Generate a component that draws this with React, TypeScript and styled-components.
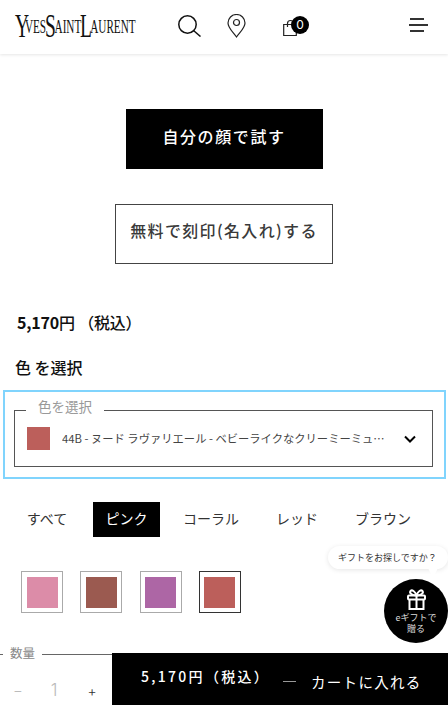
import React from "react";
import styled, { createGlobalStyle } from "styled-components";

const Global = createGlobalStyle`
  html, body { margin: 0; padding: 0; background: #fff; }
  body { font-family: "Noto Sans CJK JP", "Noto Sans", sans-serif; color: #222; }
  * { box-sizing: border-box; }
`;
const Page = styled.div`
  width: 448px; height: 705px; overflow: hidden; position: relative; background: #fff;
`;
const Header = styled.header`
  height: 54px; display: flex; align-items: center; padding: 0 20px 2px 15px;
  background: #fff; box-shadow: 0 1px 3px rgba(0,0,0,.1);
`;
const Logo = styled.svg`
  width: 122px; height: 26px; display: block; flex: none; overflow: visible;
  text { font-family: "Liberation Serif", serif; font-size: 19px; fill: #111; }
  tspan[data-big] { font-size: 33px; }
`;
const IconLink = styled.a<{ $ml: number }>`
  display: flex; position: relative; margin-left: ${p => p.$ml}px; color: #111;
`;
const Badge = styled.span`
  position: absolute; left: 8px; top: 0; width: 18px; height: 18px; border-radius: 50%;
  background: #000; color: #fff; font: 12px/18px "Inter", sans-serif; text-align: center;
`;
const Burger = styled.div`
  margin: 0 0 2px auto; width: 19px; display: flex; flex-direction: column; gap: 4.5px; align-items: flex-start;
`;
const BurgerLine = styled.span<{ $w: number; $off?: number }>`
  display: block; height: 1.5px; width: ${p => p.$w}px; margin-left: ${p => p.$off ?? 0}px; background: #333;
`;
const Cta = styled.div`
  display: flex; flex-direction: column; align-items: center; gap: 35px; padding-top: 55px;
`;
const TryButton = styled.button`
  width: 197px; height: 60px; border: 1px solid #000; background: #000; color: #fff;
  font: 500 16px "Noto Sans CJK JP", sans-serif; letter-spacing: 1.6px; padding: 0 0 6px;
`;
const EngraveButton = styled.button`
  width: 218px; height: 60px; border: 1px solid #444; background: #fff; color: #3a3a3a;
  font: 500 16px "Noto Sans CJK JP", sans-serif; letter-spacing: 1.35px; padding: 0 0 8px;
`;
const Price = styled.div`
  margin: 46px 0 0 17px; height: 24px; font: 500 16px/24px "Noto Sans CJK JP", sans-serif; color: #111;
  letter-spacing: -.2px;
`;
const PriceNum = styled.b`
  font-weight: 700;
`;
const Heading = styled.div`
  margin: 21px 0 0 15px; height: 24px; font: 500 16px/24px "Noto Sans CJK JP", sans-serif; color: #111;
`;
const Focus = styled.div`
  margin: 11px 2px 0 3px; height: 89px; border: 2px solid #80d4fd; padding: 4px 11px 0 9px;
`;
const Field = styled.fieldset`
  margin: 0; padding: 3px 12px 0; height: 71px; border: 1px solid #555; min-width: 0;
  display: block;
`;
const Legend = styled.legend`
  margin-left: -1px; padding: 0 12px 8px; font-size: 13.5px; line-height: 20px; color: #999; letter-spacing: 0;
`;
const Select = styled.div`
  display: flex; align-items: center; height: 23px;
`;
const Chip = styled.span`
  width: 23px; height: 23px; flex: none; background: #bc5f5b;
`;
const SelectText = styled.span`
  margin-left: 12px; width: 329px; font-size: 11.3px; line-height: 23px; color: #444;
  white-space: nowrap; overflow: hidden; text-overflow: ellipsis;
`;
const Chevron = styled.svg`
  margin-left: 13px; width: 12px; height: 8px; flex: none;
`;
const Tabs = styled.div`
  display: flex; gap: 13px; margin: 23px 0 0 14px; height: 35px; align-items: stretch;
`;
const Tab = styled.div<{ $active?: boolean; $w: number }>`
  width: ${p => p.$w}px; display: flex; align-items: center; justify-content: center;
  font-size: 14px; padding-bottom: 4px;
  background: ${p => (p.$active ? "#000" : "transparent")};
  color: ${p => (p.$active ? "#fff" : "#333")};
`;
const Swatches = styled.div`
  display: flex; gap: 17.3px; margin: 34px 0 0 21px;
`;
const Swatch = styled.div<{ $c: string; $active?: boolean }>`
  width: 42px; height: 42px; padding: 4.5px;
  border: 1.5px solid ${p => (p.$active ? "#333" : "#aaa")};
  &::after { content: ""; display: block; width: 100%; height: 100%; background: ${p => p.$c}; }
`;
const Bar = styled.div`
  position: absolute; left: 0; right: 0; bottom: 0; height: 52px; display: flex; background: #fff;
`;
const Qty = styled.fieldset`
  width: 112px; margin: -9px 0 0; padding: 0; border: 0; border-top: 1px solid #666; min-width: 0;
  display: block; height: 61px;
`;
const QtyLegend = styled.legend`
  margin-left: 3px; padding: 0 7px 2px; font-size: 12.5px; line-height: 18px; color: #888;
`;
const QtyRow = styled.div`
  display: grid; grid-template-columns: 36px 36px 40px; width: 112px; height: 52px;
  align-items: center; justify-items: center; font-family: "Inter", sans-serif;
`;
const QtyCell = styled.span<{ $c: string; $s: number }>`
  color: ${p => p.$c}; font-size: ${p => p.$s}px; font-weight: 300;
`;
const AddToCart = styled.div`
  flex: 1; background: #000; color: #fff; display: flex; align-items: center; padding-left: 29px;
`;
const CartPrice = styled.span`
  font: 500 14px "Noto Sans CJK JP", sans-serif; letter-spacing: 2.3px; width: 142px; margin-bottom: 6px;
  white-space: nowrap;
`;
const CartDash = styled.span`
  width: 13px; height: 1px; background: #999; margin: 4px 15px 0 0; flex: none;
`;
const CartLabel = styled.span`
  font: 400 14.5px "Noto Sans CJK JP", sans-serif; letter-spacing: 1.3px; white-space: nowrap; margin-top: 4px;
`;
const Bubble = styled.div`
  position: absolute; left: 328px; top: 546px; width: 120px; height: 23px; border-radius: 12px; background: #fff;
  box-shadow: 0 1px 5px rgba(0,0,0,.1); font-size: 9px; line-height: 23px; padding-left: 10px; color: #333;
  white-space: nowrap;
  &::after {
    content: ""; position: absolute; left: 100px; top: 22px; width: 0; height: 0;
    border-left: 5px solid transparent; border-right: 5px solid transparent; border-top: 10px solid #fff;
  }
`;
const GiftCircle = styled.div`
  position: absolute; left: 384px; top: 579px; width: 64px; height: 64px; border-radius: 50%;
  background: #000; color: #fff; display: flex; flex-direction: column; align-items: center; padding-top: 10px;
`;
const GiftLabel = styled.span`
  font-size: 9px; line-height: 11px; text-align: center; color: #ddd; margin-top: 2px; white-space: nowrap;
`;

export default function App() {
  return (
    <Page>
      <Global />
      <Header>
        <Logo viewBox="0 0 122 26">
          <text transform="scale(.59 1)" y="20">
            <tspan data-big="1" dy="4">Y</tspan>
            <tspan dy="-4" dx="-7">VES</tspan>
            <tspan data-big="1" dy="4" dx="-2">S</tspan>
            <tspan dy="-4" dx="-2">AINT</tspan>
            <tspan data-big="1" dy="4" dx="-2">L</tspan>
            <tspan dy="-4" dx="-3">AURENT</tspan>
          </text>
        </Logo>
        <IconLink $ml={41}>
          <svg width="23" height="22" viewBox="0 0 23 22" fill="none" stroke="#111" strokeWidth="1.5">
            <circle cx="9.500" cy="9.500" r="8.700" />
            <path d="M15.500 15.500 22.500 21.500" />
          </svg>
        </IconLink>
        <IconLink $ml={26}>
          <svg width="19" height="24" viewBox="0 0 19 24" fill="none" stroke="#222" strokeWidth="1.2">
            <path d="M9.500 23C6 18 1 14 1 9a8.500 8.500 0 0 1 17 0c0 5-5 9-8.500 14Z" />
            <circle cx="9.500" cy="8.500" r="3" />
          </svg>
        </IconLink>
        <IconLink $ml={37}>
          <svg width="14" height="20" viewBox="0 0 14 20" fill="none" stroke="#222" strokeWidth="1.200">
            <path d="M.7 8.500h12.600v11H.7Z" />
            <path d="M4.500 11V7.500a3 3 0 0 1 6 0V11" />
          </svg>
          <Badge>0</Badge>
        </IconLink>
        <Burger>
          <BurgerLine $w={14} $off={1} />
          <BurgerLine $w={19} />
          <BurgerLine $w={14} $off={1} />
        </Burger>
      </Header>
      <Cta>
        <TryButton>自分の顔で試す</TryButton>
        <EngraveButton>無料で刻印(名入れ)する</EngraveButton>
      </Cta>
      <Price><PriceNum>5,170</PriceNum>円 （税込）</Price>
      <Heading>色 を選択</Heading>
      <Focus>
        <Field>
          <Legend>色を選択</Legend>
          <Select>
            <Chip />
            <SelectText>44B - ヌード ラヴァリエール - ベビーライクなクリーミーミュートベージュ</SelectText>
            <Chevron viewBox="0 0 12 8" fill="none" stroke="#000" strokeWidth="2">
              <path d="M1 1.500 6 6.500 11 1.500" />
            </Chevron>
          </Select>
        </Field>
      </Focus>
      <Tabs>
        <Tab $w={66}>すべて</Tab>
        <Tab $w={67} $active>ピンク</Tab>
        <Tab $w={76}>コーラル</Tab>
        <Tab $w={70}>レッド</Tab>
        <Tab $w={76}>ブラウン</Tab>
      </Tabs>
      <Swatches>
        <Swatch $c="#dc8ca8" />
        <Swatch $c="#9b5a50" />
        <Swatch $c="#ad66a5" />
        <Swatch $c="#bc5f5b" $active />
      </Swatches>
      <Bubble>ギフトをお探しですか？</Bubble>
      <GiftCircle>
        <svg width="19" height="21" viewBox="0 0 19 21" fill="none" stroke="#fff" strokeWidth="2">
          <rect x="1" y="6.500" width="17" height="4" rx="1" />
          <path d="M2.500 10.500v9.500h14v-9.500M9.500 6.500V20" />
          <path d="M9.500 6.500C8 2 5 .5 3.500 2c-1.500 2 1.500 4.500 6 4.500Zm0 0c1.500-4.500 4.500-6 6-4.500 1.500 2-1.500 4.500-6 4.500Z" />
        </svg>
        <GiftLabel>eギフトで<br />贈る</GiftLabel>
      </GiftCircle>
      <Bar>
        <Qty>
          <QtyLegend>数量</QtyLegend>
          <QtyRow>
            <QtyCell $c="#bbb" $s={15}>−</QtyCell>
            <QtyCell $c="#bbb" $s={17}>1</QtyCell>
            <QtyCell $c="#333" $s={14}>+</QtyCell>
          </QtyRow>
        </Qty>
        <AddToCart>
          <CartPrice>5,170円（税込）</CartPrice>
          <CartDash />
          <CartLabel>カートに入れる</CartLabel>
        </AddToCart>
      </Bar>
    </Page>
  );
}
